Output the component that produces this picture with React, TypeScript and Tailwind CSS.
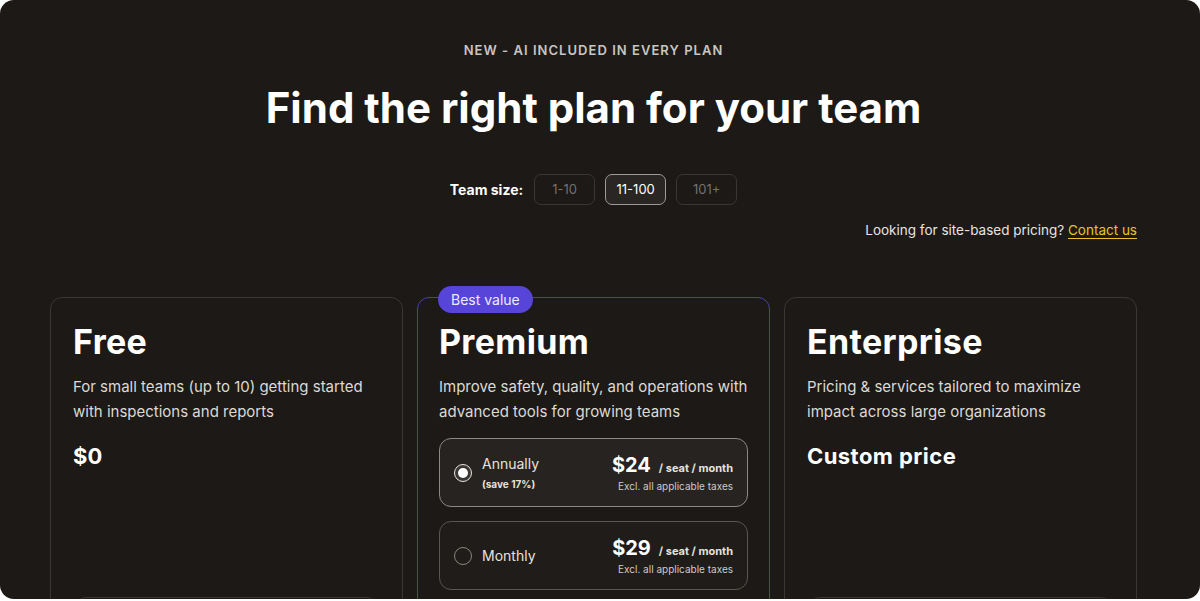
import React from "react";

const sizes = [
  { label: "1-10", active: false },
  { label: "11-100", active: true },
  { label: "101+", active: false },
];

function PriceOption({ label, note, price, active }: { label: string; note?: string; price: string; active: boolean }) {
  return (
    <div
      className={`flex items-center h-[69px] rounded-[12px] border-[1.5px] pl-[14px] pr-[14px] ${
        active ? "border-[#8d8883] bg-[#262320]" : "border-[#5a5551] bg-[#1f1c19]"
      }`}
    >
      <div
        className={`w-[18px] h-[18px] rounded-full flex items-center justify-center border-[1.5px] ${
          active ? "border-[#e8e4e0] bg-[#3a3633]" : "border-[#8a8580]"
        }`}
      >
        {active && <div className="w-[10px] h-[10px] rounded-full bg-white" />}
      </div>
      <div className="ml-[10px] flex flex-col">
        <span className="text-[14px] text-[#e6e2de] leading-[18px]">{label}</span>
        {note && <span className="text-[10px] font-bold text-[#e6e2de] mt-[5px] leading-[12px]">{note}</span>}
      </div>
      <div className="ml-auto flex flex-col items-end">
        <div className="flex items-baseline">
          <span className="text-[20px] font-bold text-white leading-[24px]">{price}</span>
          <span className="ml-[8px] text-[11px] font-bold text-[#e6e2de]">/ seat / month</span>
        </div>
        <span className="text-[10px] text-[#cfcac6] mt-[3px] leading-[12px]">Excl. all applicable taxes</span>
      </div>
    </div>
  );
}

export default function App() {
  return (
    <div className="w-[1200px] h-[601px] bg-white" style={{ fontFamily: "Inter, 'Liberation Sans', sans-serif" }}>
      <div className="w-[1200px] h-[599px] bg-[#1c1916] rounded-[14px] overflow-hidden">
        <div className="ml-[50px] w-[1087px] flex flex-col items-center">
          <p className="mt-[42px] text-[13px] font-semibold tracking-[0.08em] text-[#c9c5c1] leading-[16px]">
            NEW - AI INCLUDED IN EVERY PLAN
          </p>
          <h1 className="mt-[26px] text-[42px] font-bold text-white leading-[48px]">
            Find the right plan for your team
          </h1>
          <div className="mt-[42px] flex items-center">
            <span className="text-[14px] font-bold text-white mr-[11px]">Team size:</span>
            <div className="flex gap-[10px]">
              {sizes.map((s) => (
                <div
                  key={s.label}
                  className={`w-[61px] h-[31px] rounded-[7px] flex items-center justify-center text-[13px] ${
                    s.active
                      ? "border-[1.5px] border-[#a09b96] bg-[#292623] text-white"
                      : "border border-[#3a3633] text-[#76716c]"
                  }`}
                >
                  {s.label}
                </div>
              ))}
            </div>
          </div>
          <p className="self-end mt-[16px] text-[13.5px] text-[#e8e4e0] leading-[18px]">
            Looking for site-based pricing?{" "}
            <span className="text-[#e9c520] underline underline-offset-[3px]">Contact us</span>
          </p>

          <div className="mt-[58px] w-full grid grid-cols-3 gap-[14px]">
            {/* Free */}
            <div className="h-[360px] rounded-[12px] border border-[#3a3633] px-[22px] pt-[25px] flex flex-col">
              <h2 className="text-[34px] font-bold text-white leading-[38px] tracking-[0.01em]">Free</h2>
              <p className="mt-[13px] text-[15px] text-[#ddd9d5] leading-[25px]">
                For small teams (up to 10) getting started with inspections and reports
              </p>
              <p className="mt-[18px] text-[22px] font-bold text-white leading-[28px]">$0</p>
              <div className="mt-[127px] mx-[3px] h-[44px] rounded-[10px] border border-[#3a3633]" />
            </div>

            {/* Premium */}
            <div className="relative h-[360px] rounded-[12px] border border-[#4a3fae] px-[21px] pt-[25px] flex flex-col">
              <span className="absolute -top-[12px] left-[20px] h-[27px] px-[13px] rounded-full bg-[#5645d8] text-[14px] text-[#eceaff] flex items-center">
                Best value
              </span>
              <h2 className="text-[34px] font-bold text-white leading-[38px] tracking-[0.01em]">Premium</h2>
              <p className="mt-[13px] text-[15px] text-[#ddd9d5] leading-[25px]">
                Improve safety, quality, and operations with advanced tools for growing teams
              </p>
              <div className="mt-[14px] flex flex-col gap-[14px]">
                <PriceOption label="Annually" note="(save 17%)" price="$24" active />
                <PriceOption label="Monthly" price="$29" active={false} />
              </div>
            </div>

            {/* Enterprise */}
            <div className="h-[360px] rounded-[12px] border border-[#3a3633] px-[22px] pt-[25px] flex flex-col">
              <h2 className="text-[34px] font-bold text-white leading-[38px] tracking-[0.01em]">Enterprise</h2>
              <p className="mt-[13px] text-[15px] text-[#ddd9d5] leading-[25px]">
                Pricing &amp; services tailored to maximize impact across large organizations
              </p>
              <p className="mt-[18px] text-[22px] font-bold text-white leading-[28px] tracking-[0.02em]">Custom price</p>
              <div className="mt-[127px] mx-[3px] h-[44px] rounded-[10px] border border-[#3a3633]" />
            </div>
          </div>
        </div>
      </div>
    </div>
  );
}
